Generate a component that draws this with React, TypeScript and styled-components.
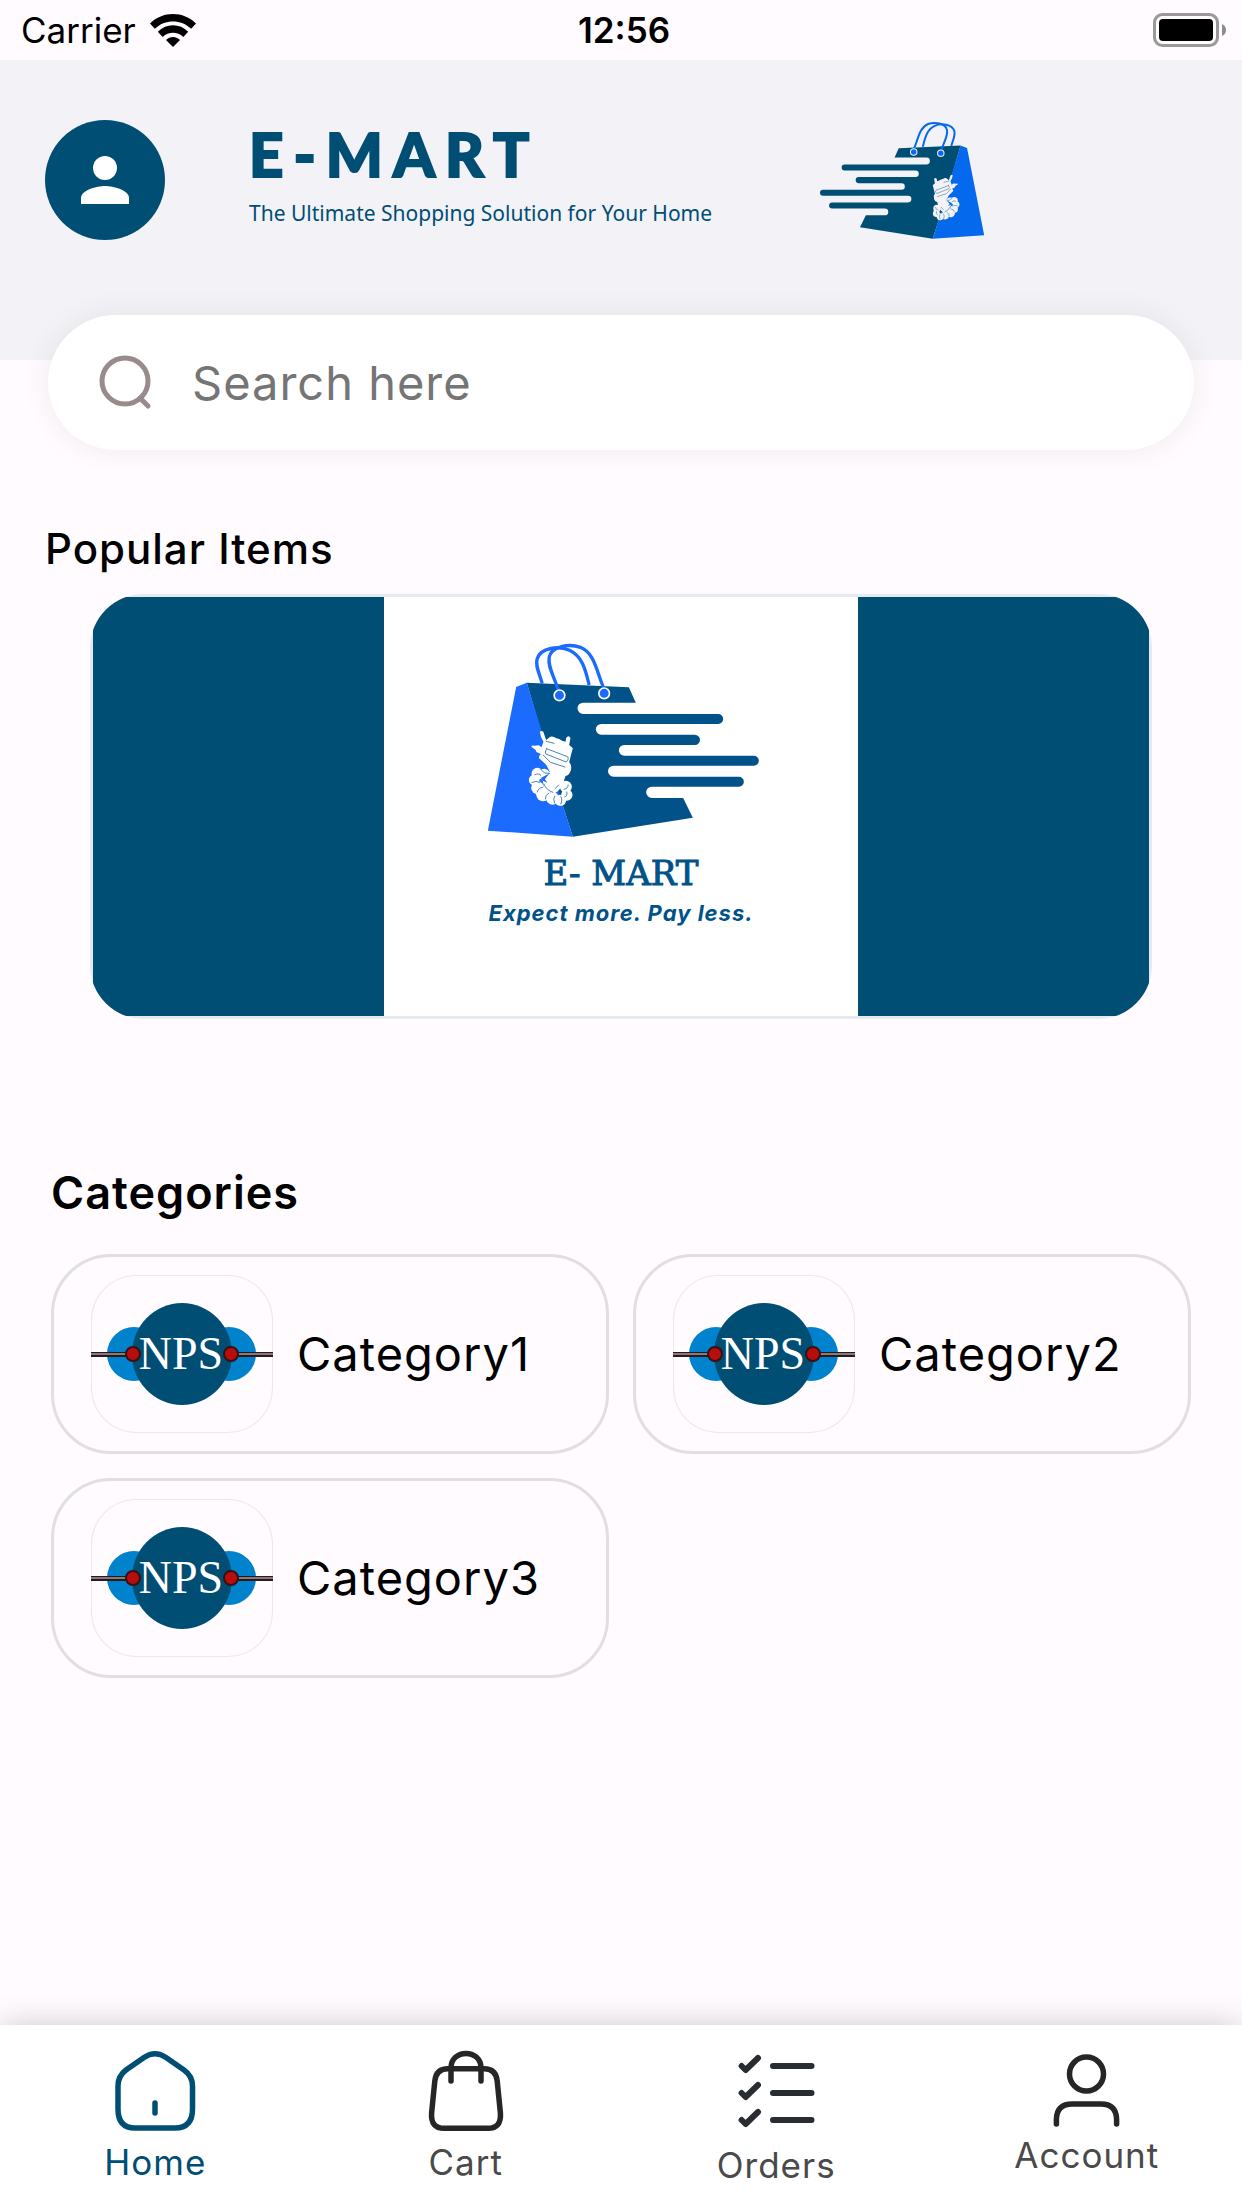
import React from "react";
import styled, { createGlobalStyle } from "styled-components";

const color = {
  page: "#fffbff",
  header: "#f2f2f7",
  brand: "#004e74",
  ink: "#000000",
  muted: "#4a4a4a",
  placeholder: "#757575",
  line: "#e0e0e0",
  softLine: "#e4eaf0",
};

const GlobalStyle = createGlobalStyle`
  *, *::before, *::after { box-sizing: border-box; }
  body {
    margin: 0;
    background: ${color.page};
    color: ${color.ink};
    font-family: Inter, "Liberation Sans", sans-serif;
    letter-spacing: 1px;
  }
  button, input { font: inherit; color: inherit; letter-spacing: inherit; }
  h1, h2, p, ul { margin: 0; padding: 0; }
  svg { display: block; flex: none; overflow: visible; }
`;

const Screen = styled.div`
  display: flex;
  flex-direction: column;
  min-height: 100vh;
`;

const StatusBar = styled.div`
  display: grid;
  grid-template-columns: 1fr auto 1fr;
  align-items: center;
  height: 60px;
  padding: 0 15px 0 21px;
  font-size: 35px;
  line-height: 44px;
  letter-spacing: normal;
`;

const Carrier = styled.div`
  display: flex;
  align-items: center;
  gap: 14px;
`;

const Clock = styled.time`
  font-weight: 600;
`;

const BatterySlot = styled.div`
  justify-self: end;
`;

const Header = styled.header`
  display: flex;
  align-items: center;
  padding: 60px 45px 120px;
  background: ${color.header};
  color: ${color.brand};
`;

const Avatar = styled.button`
  display: grid;
  place-items: center;
  flex: none;
  width: 120px;
  height: 120px;
  padding: 0;
  border: 0;
  border-radius: 50%;
  background: ${color.brand};
`;

const Brand = styled.div`
  display: flex;
  align-items: center;
  gap: 108px;
  margin-left: 84px;
`;

const Wordmark = styled.h1`
  font-family: Lato, "Liberation Sans", sans-serif;
  font-size: 60px;
  font-weight: 900;
  line-height: 56px;
  letter-spacing: 10px;
  -webkit-text-stroke: 2px ${color.brand};
`;

const Tagline = styled.p`
  padding: 15px 0 5px;
  font-family: "Noto Sans", "Liberation Sans", sans-serif;
  font-size: 21px;
  line-height: 32px;
  letter-spacing: normal;
  white-space: nowrap;
`;

const SearchBox = styled.label`
  display: flex;
  align-items: center;
  gap: 39px;
  height: 135px;
  margin: -45px 48px 0;
  padding: 0 48px;
  border-radius: 68px;
  background: #ffffff;
  box-shadow: 0 0 30px rgba(0, 0, 0, 0.07);
`;

const SearchInput = styled.input`
  flex: 1;
  min-width: 0;
  padding: 0;
  border: 0;
  outline: 0;
  background: transparent;
  font-size: 47px;
  line-height: 60px;
  &::placeholder {
    color: ${color.placeholder};
    opacity: 1;
  }
`;

const Popular = styled.section`
  padding: 72px 90px 0;
`;

const SectionTitle = styled.h2<{ $weight: number; $outdent?: number }>`
  margin-left: ${(p) => -(p.$outdent ?? 0)}px;
  font-size: ${(p) => (p.$weight > 500 ? 45 : 42)}px;
  font-weight: ${(p) => p.$weight};
  line-height: 54px;
`;

const Banner = styled.div`
  display: flex;
  height: 425px;
  margin-top: 18px;
  padding: 3px;
  border-radius: 54px;
  background: ${color.softLine};
  overflow: hidden;
`;

const BannerSlide = styled.div`
  display: flex;
  justify-content: center;
  flex: 1;
  background: ${color.brand};
`;

const BannerCard = styled.div`
  display: flex;
  flex-direction: column;
  align-items: center;
  width: 474px;
  padding-top: 47px;
  background: #ffffff;
  color: #005288;
`;

const BannerLogo = styled.div`
  padding-left: 5px;
`;

const BannerName = styled.p`
  padding-top: 14px;
  font-family: "DejaVu Serif", serif;
  font-size: 34px;
  line-height: 44px;
  letter-spacing: normal;
  -webkit-text-stroke: 1px #005288;
`;

const BannerSlogan = styled.p`
  font-size: 22px;
  font-style: italic;
  font-weight: 700;
  line-height: 36px;
`;

const Categories = styled.section`
  padding: 147px 51px 60px;
`;

const CategoryGrid = styled.ul`
  display: grid;
  grid-template-columns: 1fr 1fr;
  gap: 24px;
  margin-top: 34px;
  list-style: none;
`;

const CategoryCard = styled.button`
  display: flex;
  align-items: center;
  gap: 24px;
  width: 100%;
  height: 200px;
  padding: 0 37px;
  border: 3px solid ${color.line};
  border-radius: 60px;
  background: transparent;
  font-size: 47px;
  line-height: 60px;
`;

const Thumb = styled.span`
  flex: none;
  border-radius: 45px;
  box-shadow: inset 0 0 0 1px ${color.softLine};
`;

const TabBar = styled.nav`
  display: grid;
  grid-template-columns: repeat(4, 1fr);
  align-items: start;
  margin-top: auto;
  padding: 24px 0 21px;
  background: #ffffff;
  box-shadow: 0 0 30px rgba(0, 0, 0, 0.2);
`;

const Tab = styled.a<{ $active?: boolean }>`
  display: flex;
  flex-direction: column;
  align-items: center;
  gap: 7px;
  color: ${(p) => (p.$active ? color.brand : color.muted)};
  font-size: 35px;
  line-height: 44px;
  text-decoration: none;
`;

const WifiIcon = () => (
  <svg width="46" height="33" viewBox="0 0 46 33" aria-hidden="true">
    <path d="M0 9.5C12.5-3.2 33.500-3.200 46 9.500L41.200 14.800C31.200 5 14.800 5 4.800 14.800Z" />
    <path d="M7.800 17.800C16.500 9.200 29.500 9.200 38.200 17.800L33.300 22.900C27.500 17.400 18.500 17.400 12.700 22.900Z" />
    <path d="M16 26C20 22.100 26 22.100 30 26L23 33Z" />
  </svg>
);

const BatteryIcon = () => (
  <svg width="74" height="34" viewBox="0 0 74 34" aria-hidden="true">
    <rect x="1.500" y="1.500" width="63" height="31" rx="8" fill="none" stroke="#999" strokeWidth="3" />
    <rect x="6" y="6" width="54" height="22" rx="4" />
    <path d="M69 11C72 12.500 73 14.500 73 17S72 21.500 69 23Z" fill="#8c8c8c" />
  </svg>
);

const PersonIcon = () => (
  <svg width="48" height="48" viewBox="0 0 48 48" fill="#fff" aria-hidden="true">
    <circle cx="24" cy="12" r="12" />
    <path d="M0 48V42C0 34 16 30 24 30S48 34 48 42V48Z" />
  </svg>
);

const SearchIcon = () => (
  <svg width="57" height="57" viewBox="0 0 57 57" fill="none" stroke="#998a8b" strokeWidth="5" strokeLinecap="round" aria-hidden="true">
    <circle cx="29" cy="27" r="23" />
    <path d="M44 44L52 52" />
  </svg>
);

type BagProps = { width: number; height: number; body: string; side: string; gap: string; flip?: boolean };

const BagLogo = ({ width, height, body, side, gap, flip }: BagProps) => (
  <svg width={width} height={height} viewBox="88 72 812 579" role="img" aria-label="E-Mart shopping bag">
    <g transform={flip ? "translate(988 0) scale(-1 1)" : undefined}>
      <path d="M204 188L510 202L531 248H373A17 17 0 0 0 373 282H778A15 15 0 0 1 778 312H427A16 16 0 0 0 427 344H708A15 15 0 0 1 708 375H496A16 16 0 0 0 496 407H885A15 15 0 0 1 885 437H464A16 16 0 0 0 464 470H840A15 15 0 0 1 840 500H579A17 17 0 0 0 579 534H673L702 593L342 650L300 520Z" fill={body} />
      <path d="M204 188L172 201L87 632L342 650L312 555L246 325Z" fill={side} />
      <g fill="none" stroke={side} strokeWidth="10">
        <path d="M250 190C240 155 229 138 235 116C246 83 300 76 332 91C373 110 381 156 391 195" />
        <path d="M300 215C286 168 266 142 271 112C278 78 331 70 365 82C410 101 413 158 437 209" />
      </g>
      <g fill={side} stroke={gap} strokeWidth="5">
        <circle cx="302" cy="226" r="16" />
        <circle cx="436" cy="220" r="16" />
      </g>
      <g fill={gap}>
        <path d="M243 335Q253 329 256 343L262 360L274 350Q284 348 291 354L301 357L310 362L320 365L322 354Q329 344 335 354L331 375L342 385L337 403Q334 417 331 426Q341 438 335 454Q331 466 320 468L313 490Q302 514 287 520Q266 519 255 504L252 482Q243 474 250 468L273 455L262 434L240 414Q240 406 246 402L233 396L230 389L218 381Q217 375 226 377L240 376L248 382L254 365Q244 349 243 335Z" />
        <circle cx="236" cy="461" r="18" />
        <circle cx="226" cy="480" r="16" />
        <circle cx="236" cy="503" r="19" />
        <circle cx="253" cy="523" r="21" />
        <circle cx="281" cy="535" r="19" />
        <circle cx="305" cy="541" r="17" />
        <circle cx="324" cy="525" r="17" />
        <circle cx="321" cy="500" r="18" />
        <circle cx="256" cy="462" r="16" />
      </g>
      <g fill="none" stroke={body} strokeWidth="3" strokeLinecap="round" opacity="0.700">
        <path d="M263 386L326 410Q330 414 327 420L322 426L261 402Q257 399 263 386Z" />
        <path d="M262 364L286 370M253 405L275 427L318 441" />
        <path d="M245 447L257 459L272 460M228 464Q240 458 246 466M219 487Q233 481 242 487M235 516Q239 503 251 502M260 537Q259 524 270 520M287 549Q281 536 288 528M306 552Q312 538 306 530M318 531Q327 527 324 516M316 508Q329 505 328 495M290 505L299 495M255 492Q263 511 282 517" />
      </g>
      <path d="M246 474L272 460L258 478L266 488L252 482Z" fill={side} />
    </g>
  </svg>
);

const NpsLogo = () => (
  <svg width="182" height="158" viewBox="0 0 182 158" role="img" aria-label="NPS">
    <g fill="#0082cc">
      <circle cx="43" cy="79" r="27" />
      <circle cx="138" cy="79" r="27" />
    </g>
    <ellipse cx="91" cy="79" rx="50" ry="51" fill="#004e74" />
    <g stroke="#261a1c" strokeWidth="5">
      <path d="M0 79.500H42M140 79.500H182" />
    </g>
    <path d="M0 79H42M140 79H182" stroke="#8d7779" strokeWidth="2" />
    <text x="90" y="94" textAnchor="middle" fontFamily="'Liberation Serif', serif" fontSize="46" letterSpacing="0" fill="#fff">NPS</text>
    <g fill="#b80d0d" stroke="#38100f" strokeWidth="2">
      <circle cx="42" cy="79" r="7" />
      <circle cx="140" cy="79" r="7" />
    </g>
  </svg>
);

const HomeIcon = () => (
  <svg width="84" height="84" viewBox="0 0 84 84" fill="none" stroke="#004e74" strokeWidth="5.500" strokeLinecap="round" aria-hidden="true">
    <path d="M31 8.500Q42 1 53 8.500L71 21Q79.500 27 79.500 37V60Q79.500 79 62 79H22Q5 79 5 60V37Q5 27 13 21Z" />
    <path d="M42 54V64" />
  </svg>
);

const CartIcon = () => (
  <svg width="84" height="84" viewBox="0 0 84 84" fill="none" stroke="#262626" strokeWidth="5.500" strokeLinecap="round" aria-hidden="true">
    <path d="M24 19.700H60Q72 19.700 73.200 32L76.400 64Q77.500 79.300 64 79.300H20Q6.500 79.300 7.600 64L10.800 32Q12 19.700 24 19.700Z" />
    <path d="M27 32V19C27-.500 57-.500 57 19V32" />
  </svg>
);

const OrdersIcon = () => (
  <svg width="87" height="87" viewBox="0 0 87 87" fill="none" stroke="#292d32" strokeWidth="6" strokeLinecap="round" strokeLinejoin="round" aria-hidden="true">
    {[17, 44, 71].map((y) => (
      <path key={y} d={`M8.600 ${y}L12.600 ${y + 4}L25 ${y - 8}M40 ${y}H78.500`} />
    ))}
  </svg>
);

const AccountIcon = () => (
  <svg width="77" height="77" viewBox="0 0 77 77" fill="none" stroke="#262626" strokeWidth="5.500" strokeLinecap="round" aria-hidden="true">
    <circle cx="38.500" cy="25" r="17" />
    <path d="M8.400 75V70Q9 55 24 55H53Q68 55 68.600 70V75" />
  </svg>
);

const categories = ["Category1", "Category2", "Category3"];

const tabs = [
  { name: "Home", Icon: HomeIcon, active: true },
  { name: "Cart", Icon: CartIcon },
  { name: "Orders", Icon: OrdersIcon },
  { name: "Account", Icon: AccountIcon },
];

export default function App() {
  return (
    <Screen>
      <GlobalStyle />
      <StatusBar>
        <Carrier>
          Carrier
          <WifiIcon />
        </Carrier>
        <Clock>12:56</Clock>
        <BatterySlot>
          <BatteryIcon />
        </BatterySlot>
      </StatusBar>

      <Header>
        <Avatar type="button" aria-label="Profile">
          <PersonIcon />
        </Avatar>
        <Brand>
          <div>
            <Wordmark>E-MART</Wordmark>
            <Tagline>The Ultimate Shopping Solution for Your Home</Tagline>
          </div>
          <BagLogo width={164} height={117} body="#004e74" side="#0569ee" gap="#f2f2f7" flip />
        </Brand>
      </Header>

      <SearchBox>
        <SearchIcon />
        <SearchInput type="search" placeholder="Search here" aria-label="Search" />
      </SearchBox>

      <main>
        <Popular>
          <SectionTitle $weight={500} $outdent={45}>Popular Items</SectionTitle>
          <Banner>
            <BannerSlide>
              <BannerCard>
                <BannerLogo>
                  <BagLogo width={271} height={193} body="#005288" side="#1b6bff" gap="#ffffff" />
                </BannerLogo>
                <BannerName>E- MART</BannerName>
                <BannerSlogan>Expect more. Pay less.</BannerSlogan>
              </BannerCard>
            </BannerSlide>
          </Banner>
        </Popular>

        <Categories>
          <SectionTitle $weight={600}>Categories</SectionTitle>
          <CategoryGrid>
            {categories.map((name) => (
              <li key={name}>
                <CategoryCard type="button">
                  <Thumb>
                    <NpsLogo />
                  </Thumb>
                  {name}
                </CategoryCard>
              </li>
            ))}
          </CategoryGrid>
        </Categories>
      </main>

      <TabBar>
        {tabs.map(({ name, Icon, active }) => (
          <Tab key={name} href={`#${name.toLowerCase()}`} $active={active}>
            <Icon />
            {name}
          </Tab>
        ))}
      </TabBar>
    </Screen>
  );
}
